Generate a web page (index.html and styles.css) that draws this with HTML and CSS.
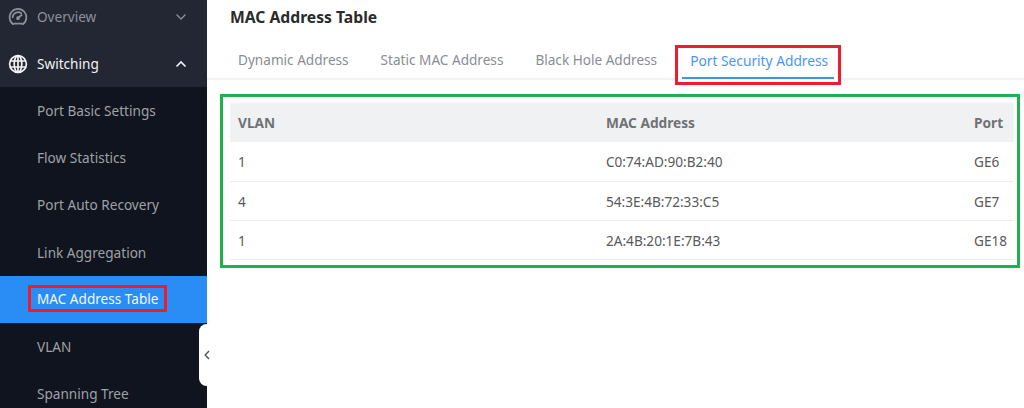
FILE: index.html
```html
<!DOCTYPE html>
<html lang="en">
<head>
<meta charset="utf-8">
<title>MAC Address Table</title>
<link rel="stylesheet" href="styles.css">
</head>
<body>
<div class="app">
  <aside class="sidebar">
    <div class="menu-row dim">
      <svg class="menu-icon" viewBox="0 0 20 20" fill="none" stroke="currentColor" stroke-width="1.7" stroke-linecap="round"><path d="M5.2 17.2A8.4 8.4 0 1 1 14.8 17.2"/><path d="M6 16.6h8"/><path d="M4.6 10.4a5.5 5.5 0 0 1 8.6-4.2"/><path d="M10 11l3.6-3"/><circle cx="10" cy="11.2" r="1" fill="currentColor"/></svg>
      <span class="menu-label">Overview</span>
      <svg class="chev" viewBox="0 0 12 8" fill="none" stroke="currentColor" stroke-width="1.3"><path d="M1.5 1.5 6 6l4.5-4.5"/></svg>
    </div>
    <div class="menu-row bright">
      <svg class="menu-icon" viewBox="0 0 20 20" fill="none" stroke="currentColor" stroke-width="1.7"><circle cx="10" cy="10" r="8.4"/><ellipse cx="10" cy="10" rx="3.8" ry="8.4"/><path d="M2 7h16M2 13h16M10 1.6v16.8"/></svg>
      <span class="menu-label">Switching</span>
      <svg class="chev" viewBox="0 0 12 8" fill="none" stroke="currentColor" stroke-width="1.6"><path d="M1.5 6.5 6 2l4.5 4.5"/></svg>
    </div>
    <ul class="submenu">
      <li class="sub-item">Port Basic Settings</li>
      <li class="sub-item">Flow Statistics</li>
      <li class="sub-item">Port Auto Recovery</li>
      <li class="sub-item">Link Aggregation</li>
      <li class="sub-item active"><span class="mark-red">MAC Address Table</span></li>
      <li class="sub-item">VLAN</li>
      <li class="sub-item">Spanning Tree</li>
    </ul>
    <div class="collapse">
      <svg viewBox="0 0 6 10" fill="none" stroke="currentColor" stroke-width="1.4"><path d="M5 1 1.2 5 5 9"/></svg>
    </div>
  </aside>
  <main class="main">
    <h1 class="title">MAC Address Table</h1>
    <nav class="tabs">
      <a class="tab">Dynamic Address</a>
      <a class="tab">Static MAC Address</a>
      <a class="tab">Black Hole Address</a>
      <div class="tab-mark"><a class="tab current">Port Security Address</a></div>
    </nav>
    <section class="green-box">
      <table class="grid">
        <thead>
          <tr><th class="col-vlan">VLAN</th><th class="col-mac">MAC Address</th><th class="col-port">Port</th></tr>
        </thead>
        <tbody>
          <tr><td>1</td><td>C0:74:AD:90:B2:40</td><td>GE6</td></tr>
          <tr><td>4</td><td>54:3E:4B:72:33:C5</td><td>GE7</td></tr>
          <tr><td>1</td><td>2A:4B:20:1E:7B:43</td><td>GE18</td></tr>
        </tbody>
      </table>
    </section>
  </main>
</div>
</body>
</html>
```
FILE: styles.css
```css
* { box-sizing: border-box; }
html, body { margin: 0; padding: 0; }
body {
  width: 1024px;
  height: 408px;
  overflow: hidden;
  background: #fff;
  font-family: "Noto Sans", "Open Sans", sans-serif;
  font-size: 13.6px;
  color: #595959;
}
.app { display: flex; height: 408px; }

.sidebar {
  position: relative;
  flex: 0 0 207px;
  height: 408px;
  background: #222733;
}
.menu-row {
  display: flex;
  align-items: center;
  height: 47px;
  padding: 0 20px 0 8px;
}
.menu-row:first-child { margin-top: -7px; }
.dim { color: #8d9098; }
.bright { color: #f2f3f5; }
.menu-icon { width: 20px; height: 20px; flex: none; }
.menu-label { flex: 1; margin-left: 9px; }
.chev { width: 12px; height: 8px; flex: none; }

.submenu {
  list-style: none;
  margin: 0;
  padding: 0;
  background: #10141e;
  height: 321px;
}
.sub-item {
  height: 47.2px;
  display: flex;
  align-items: center;
  padding-left: 37px;
  color: #9fa1a6;
}
.sub-item.active { background: #2a8cf5; color: #f4f9ff; }
.mark-red {
  margin-left: -9px;
  margin-top: -2px;
  padding: 0 6px 0 6px;
  height: 27px;
  line-height: 21px;
  border: 3px solid #ee1c2e;
}
.collapse {
  position: absolute;
  left: 199px;
  top: 324px;
  width: 15px;
  height: 62px;
  background: #fff;
  border-radius: 8px;
  display: flex;
  align-items: center;
  justify-content: center;
  color: #4a5260;
}
.collapse svg { width: 6px; height: 10px; }

.main { flex: 1; min-width: 0; }
.title {
  margin: 0;
  padding: 6px 0 0 23px;
  height: 45px;
  font-size: 15.7px;
  line-height: 22px;
  font-weight: 700;
  color: #2b2b2b;
}
.tabs {
  display: flex;
  align-items: flex-start;
  height: 35px;
  padding-left: 31px;
  border-bottom: 2px solid #f3f3f4;
}
.tab {
  display: block;
  margin-right: 32px;
  padding-top: 5px;
  line-height: 20px;
  color: #8a8d93;
}
.tab-mark {
  flex: none;
  margin: 0 0 0 -14px;
  width: 166px;
  height: 40px;
  border: 3px solid #ee1c2e;
  background: #fff;
  padding: 0 4px;
  position: relative;
  z-index: 1;
}
.tab.current {
  margin: 0;
  padding: 2px 0 0 8px;
  height: 31px;
  line-height: 22px;
  font-size: 13.75px;
  color: #4b96f5;
  border-bottom: 2px solid #3f93f4;
  width: 152px;
}
.green-box {
  margin: 14px 4px 0 13px;
  width: 800px;
  height: 174px;
  border: 3px solid #1fb14e;
  padding: 6px 3px 0 7px;
}
.grid { width: 100%; border-collapse: collapse; table-layout: fixed; }
.grid th {
  height: 39px;
  background: #f0f1f3;
  text-align: left;
  padding: 0 0 0 8px;
  font-weight: 700;
  color: #6f7176;
  font-size: 13.7px;
}
.grid td {
  height: 39px;
  padding: 1px 0 0 8px;
  border-bottom: 1px solid #eeeeef;
  color: #595959;
  font-size: 13.6px;
}
.col-vlan { width: 368px; }
.col-mac { width: 368px; }
```
